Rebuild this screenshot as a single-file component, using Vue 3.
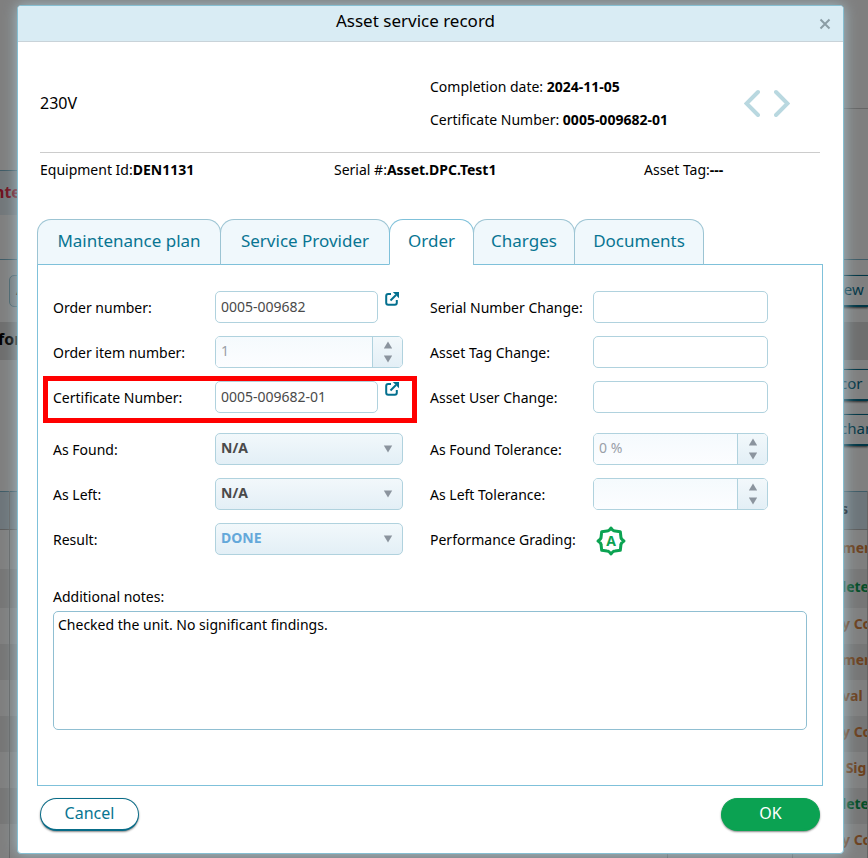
<script setup>
import { ref } from 'vue'

const tabs = ['Maintenance plan', 'Service Provider', 'Order', 'Charges', 'Documents']
const activeTab = ref('Order')

const rows = [
  { text: 'men', tone: 'pending' },
  { text: 'lete', tone: 'done' },
  { text: 'y Co', tone: 'pending' },
  { text: 'men', tone: 'pending' },
  { text: 'val', tone: 'pending' },
  { text: 'y Co', tone: 'pending' },
  { text: '\u00a0Sig', tone: 'pending' },
  { text: 'lete', tone: 'done' },
  { text: 'y Co', tone: 'pending' },
]

const orderNumber = ref('0005-009682')
const itemNumber = ref('1')
const certificateNumber = ref('0005-009682-01')
const asFound = ref('N/A')
const asLeft = ref('N/A')
const result = ref('DONE')
const serialChange = ref('')
const tagChange = ref('')
const userChange = ref('')
const foundTolerance = ref('0 %')
const leftTolerance = ref('')
const notes = ref('Checked the unit. No significant findings.')
</script>

<template>
  <div class="screen">
    <div class="page">
      <div class="page-top"></div>
      <div class="page-rule"></div>
      <div class="page-alert">nte</div>
      <div class="page-gap"></div>
      <div class="page-toolbar">
        <span class="page-box">A</span>
        <span class="page-button">iew</span>
      </div>
      <div class="page-band">for</div>
      <div class="page-actions">
        <span class="page-button">cor</span>
        <span class="page-button">char</span>
      </div>
      <table class="page-table">
        <colgroup>
          <col class="c-first" />
          <col />
          <col class="c-third" />
          <col class="c-status" />
        </colgroup>
        <thead>
          <tr><th></th><th></th><th></th><th>s</th></tr>
        </thead>
        <tbody>
          <tr v-for="(row, i) in rows" :key="i">
            <td></td><td></td><td></td><td :class="row.tone">{{ row.text }}</td>
          </tr>
        </tbody>
      </table>
    </div>
    <div class="backdrop"></div>

    <section class="modal" role="dialog" aria-labelledby="title">
      <header class="modal-head">
        <h1 id="title">Asset service record</h1>
        <button class="close" type="button" aria-label="Close">
          <svg width="12" height="12" viewBox="0 0 12 12"><path d="M1.5 1.5 10.5 10.5M10.5 1.5 1.5 10.5" /></svg>
        </button>
      </header>

      <div class="summary">
        <div class="name">230V</div>
        <div class="facts">
          <div>Completion date: <b>2024-11-05</b></div>
          <div>Certificate Number: <b>0005-009682-01</b></div>
        </div>
        <div class="pager">
          <button type="button" aria-label="Previous">
            <svg width="16" height="28" viewBox="0 0 16 28"><path d="M14 3 2.5 14.5 14 26" /></svg>
          </button>
          <button type="button" aria-label="Next">
            <svg width="16" height="28" viewBox="0 0 16 28"><path d="M2 3 13.5 14.5 2 26" /></svg>
          </button>
        </div>
      </div>

      <div class="ids">
        <div>Equipment Id:<b>DEN1131</b></div>
        <div>Serial #:<b>Asset.DPC.Test1</b></div>
        <div>Asset Tag:<b>---</b></div>
      </div>

      <nav class="tabs" role="tablist">
        <button
          v-for="tab in tabs"
          :key="tab"
          type="button"
          role="tab"
          :aria-selected="tab === activeTab"
          :class="['tab', { active: tab === activeTab }]"
          @click="activeTab = tab"
        >{{ tab }}</button>
      </nav>

      <div class="panel">
        <div class="form">
          <div class="column left">
            <div class="pair">
              <label for="order">Order number:</label>
              <div class="linked">
                <input id="order" v-model="orderNumber" class="box" type="text" />
                <a href="#order" aria-label="Open order">
                  <svg width="14" height="14" viewBox="0 0 14 14"><path class="frame" d="M6 2H3.2Q1.2 2 1.2 4v6.8q0 2 2 2h6.6q2 0 2-2V8" /><path class="frame" d="M5.5 8.5 11 3" /><path class="head" d="M7.8 0H14v6.2Z" /></svg>
                </a>
              </div>
            </div>
            <div class="pair">
              <label for="item">Order item number:</label>
              <div class="stepper">
                <input id="item" v-model="itemNumber" type="text" disabled />
                <div class="steps">
                  <button type="button" aria-label="Increase" disabled><svg width="10" height="8" viewBox="0 0 10 8"><path d="M5 .5 9.2 7.5H.8Z" /></svg></button>
                  <button type="button" aria-label="Decrease" disabled><svg width="10" height="8" viewBox="0 0 10 8"><path d="M.8.5h8.4L5 7.5Z" /></svg></button>
                </div>
              </div>
            </div>
            <div class="pair">
              <label for="cert">Certificate Number:</label>
              <div class="linked">
                <input id="cert" v-model="certificateNumber" class="box" type="text" />
                <a href="#cert" aria-label="Open certificate">
                  <svg width="14" height="14" viewBox="0 0 14 14"><path class="frame" d="M6 2H3.2Q1.2 2 1.2 4v6.8q0 2 2 2h6.6q2 0 2-2V8" /><path class="frame" d="M5.5 8.5 11 3" /><path class="head" d="M7.8 0H14v6.2Z" /></svg>
                </a>
              </div>
              <div class="highlight"></div>
            </div>
            <div class="pair spaced">
              <label for="found">As Found:</label>
              <div class="drop">
                <select id="found" v-model="asFound"><option>N/A</option></select>
                <svg width="10" height="8" viewBox="0 0 10 8"><path d="M.8.5h8.4L5 7.5Z" /></svg>
              </div>
            </div>
            <div class="pair">
              <label for="leftstate">As Left:</label>
              <div class="drop">
                <select id="leftstate" v-model="asLeft"><option>N/A</option></select>
                <svg width="10" height="8" viewBox="0 0 10 8"><path d="M.8.5h8.4L5 7.5Z" /></svg>
              </div>
            </div>
            <div class="pair">
              <label for="result">Result:</label>
              <div class="drop">
                <select id="result" v-model="result" class="blue"><option>DONE</option></select>
                <svg width="10" height="8" viewBox="0 0 10 8"><path d="M.8.5h8.4L5 7.5Z" /></svg>
              </div>
            </div>
          </div>

          <div class="column right">
            <div class="pair">
              <label for="serial">Serial Number Change:</label>
              <input id="serial" v-model="serialChange" class="box" type="text" />
            </div>
            <div class="pair">
              <label for="tag">Asset Tag Change:</label>
              <input id="tag" v-model="tagChange" class="box" type="text" />
            </div>
            <div class="pair">
              <label for="user">Asset User Change:</label>
              <input id="user" v-model="userChange" class="box" type="text" />
            </div>
            <div class="pair spaced">
              <label for="ftol">As Found Tolerance:</label>
              <div class="stepper">
                <input id="ftol" v-model="foundTolerance" type="text" disabled />
                <div class="steps">
                  <button type="button" aria-label="Increase" disabled><svg width="10" height="8" viewBox="0 0 10 8"><path d="M5 .5 9.2 7.5H.8Z" /></svg></button>
                  <button type="button" aria-label="Decrease" disabled><svg width="10" height="8" viewBox="0 0 10 8"><path d="M.8.5h8.4L5 7.5Z" /></svg></button>
                </div>
              </div>
            </div>
            <div class="pair">
              <label for="ltol">As Left Tolerance:</label>
              <div class="stepper">
                <input id="ltol" v-model="leftTolerance" type="text" disabled />
                <div class="steps">
                  <button type="button" aria-label="Increase" disabled><svg width="10" height="8" viewBox="0 0 10 8"><path d="M5 .5 9.2 7.5H.8Z" /></svg></button>
                  <button type="button" aria-label="Decrease" disabled><svg width="10" height="8" viewBox="0 0 10 8"><path d="M.8.5h8.4L5 7.5Z" /></svg></button>
                </div>
              </div>
            </div>
            <div class="pair">
              <span class="caption">Performance Grading:</span>
              <svg class="badge" width="36" height="36" viewBox="-18 -18 36 36">
                <path d="M0-13Q2-9.8 4-9.9L9.3-9.3 9.9-4Q9.8-2 13 0 9.8 2 9.9 4L9.3 9.3 4 9.9Q2 9.8 0 13-2 9.8-4 9.9L-9.3 9.3-9.9 4Q-9.8 2-13 0-9.8-2-9.9-4L-9.3-9.3-4-9.9Q-2-9.8 0-13Z" />
                <text x="0" y="5" text-anchor="middle">A</text>
              </svg>
            </div>
          </div>
        </div>

        <label class="notes-label" for="notes">Additional notes:</label>
        <textarea id="notes" v-model="notes"></textarea>
      </div>

      <footer class="actions">
        <button class="pill" type="button">Cancel</button>
        <button class="pill primary" type="button">OK</button>
      </footer>
    </section>
  </div>
</template>

<style>
body {
  background: #808080;
}
</style>

<style scoped>
* {
  box-sizing: border-box;
}
.screen {
  position: relative;
  min-height: 100vh;
  overflow: hidden;
  display: flow-root;
  font-family: "Noto Sans", "Open Sans", sans-serif;
  font-size: 14px;
  line-height: 20px;
  color: #000;
}
button,
input,
select,
textarea {
  font: inherit;
  margin: 0;
}
button {
  border: 0;
  padding: 0;
  background: none;
  cursor: pointer;
}
h1 {
  margin: 0;
}

/* Page behind the dialog */
.page,
.backdrop {
  position: absolute;
  inset: 0;
  overflow: hidden;
}
.page {
  background: #fff;
}
.backdrop {
  background: rgba(0, 0, 0, 0.5);
}
.page-top {
  height: 108px;
}
.page-rule {
  height: 62px;
  margin-left: 50%;
  border-top: 1px solid #ccc;
}
.page-alert {
  width: 50%;
  height: 45px;
  border-top: 1px solid #7fb6cc;
  background: #e4eff4;
  color: #e0203c;
  font-size: 16px;
  font-weight: 700;
  line-height: 42px;
  text-indent: -6px;
}
.page-gap {
  height: 45px;
  border-bottom: 1px solid #7fb6cc;
}
.page-toolbar {
  display: flex;
  justify-content: space-between;
  height: 62px;
  padding: 15px 0;
}
.page-box {
  width: 60px;
  margin-left: 9px;
  padding: 4px 6px;
  border: 1px solid #8fc0d0;
  border-radius: 5px;
  background: #eaf4f8;
}
.page-button {
  width: 68px;
  height: 32px;
  padding-left: 40px;
  border: solid #046d8b;
  border-width: 1px 0 2px;
  box-shadow: 0 1px 2px #555;
  color: #046d8b;
  font-size: 15px;
  line-height: 27px;
  white-space: nowrap;
  overflow: hidden;
}
.page-band {
  height: 38px;
  background: #dcdcdc;
  font-size: 16px;
  font-weight: 700;
  line-height: 34px;
  text-indent: -2px;
}
.page-actions {
  display: flex;
  flex-direction: column;
  align-items: flex-end;
  gap: 13px;
  height: 131px;
  padding-top: 9px;
}
.page-table {
  width: 100%;
  table-layout: fixed;
  border-collapse: collapse;
}
.c-first {
  width: 9px;
}
.c-third {
  width: 125px;
}
.c-status {
  width: 75px;
}
.page-table th {
  height: 38px;
  background: #dbebf4;
  border-top: 1px solid #7fb6cc;
  border-bottom: 1px solid #bbb;
}
.page-table th,
.page-table td {
  padding: 0 0 3px 48px;
  border-right: 1px solid #c8c8c8;
  text-align: left;
  font-size: 14px;
  font-weight: 700;
  white-space: nowrap;
  overflow: hidden;
}
.page-table td:last-child {
  padding-left: 49px;
}
.page-table th:not(:last-child),
.page-table td:not(:last-child) {
  padding: 0;
}
.page-table td {
  height: 36px;
}
.page-table tbody tr:nth-child(-n + 2) td {
  height: 39px;
}
.page-table tbody tr:nth-child(even) {
  background: #ededed;
}
.page-table .pending {
  color: #d9833e;
}
.page-table .done {
  color: #0a9c50;
}

/* Dialog */
.modal {
  position: relative;
  margin: 5px 24px 5px 17px;
  border: 1px solid #86bfd2;
  border-radius: 4px;
  background: #fff;
  box-shadow: 0 0 14px #a5bfc9;
}
.modal-head {
  display: flex;
  align-items: center;
  height: 36px;
  padding-right: 12px;
  border-bottom: 1px solid #c9d3d9;
  border-radius: 3px 3px 0 0;
  background: #d9ecf4;
}
.modal-head h1 {
  flex: 1;
  padding: 0 0 6px;
  font-size: 17px;
  font-weight: 400;
  text-align: center;
}
.close {
  display: flex;
  margin-left: 6px;
}
.close path {
  fill: none;
  stroke: #8b9da5;
  stroke-width: 2;
}
.summary {
  display: grid;
  grid-template-columns: 390fr 314fr 76fr;
  align-items: center;
  height: 111px;
  margin: 0 23px 0 22px;
  padding-top: 12px;
  border-bottom: 1px solid #ccc;
}
.name {
  font-size: 16px;
}
.facts {
  display: grid;
  gap: 13px;
}
.pager {
  display: flex;
  gap: 14px;
}
.pager button {
  display: flex;
}
.pager path {
  fill: none;
  stroke: #b9d8e0;
  stroke-width: 4;
  stroke-linecap: round;
}
.ids {
  display: grid;
  grid-template-columns: 294fr 310fr 176fr;
  margin: 0 23px 0 22px;
  padding: 7px 0 39px;
}
.tabs {
  position: relative;
  z-index: 1;
  display: grid;
  grid-template-columns: 183px 169px 84px 101px 129px;
  margin: 0 19px;
}
.tab {
  height: 46px;
  margin-right: -1px;
  padding-bottom: 3px;
  border: 1px solid #9cc4d3;
  border-bottom-color: #7fc1da;
  border-radius: 14px 14px 0 0;
  background: #f0f8fc;
  color: #087592;
  font-size: 17px;
  white-space: nowrap;
}
.tab.active {
  border-color: #7fc1da;
  border-bottom-color: #fff;
  background: #fff;
}
.panel {
  margin: -1px 20px 0 19px;
  padding: 26px 15px 55px;
  border: 1px solid #7fc1da;
}
.form {
  display: grid;
  grid-template-columns: 350px 338px;
  column-gap: 27px;
}
.column {
  display: flex;
  flex-direction: column;
  gap: 13px;
}
.pair {
  position: relative;
  display: grid;
  grid-template-columns: 162px 1fr;
  height: 32px;
}
.right .pair {
  grid-template-columns: 163px 1fr;
}
.spaced {
  margin-top: 7px;
}
.pair > label,
.caption {
  padding-top: 7px;
  white-space: nowrap;
}
.linked {
  display: grid;
  grid-template-columns: 163px 14px;
  gap: 7px;
}
.linked a {
  display: flex;
  padding-top: 1px;
}
.frame {
  fill: none;
  stroke: #04708f;
  stroke-width: 2;
}
.head {
  fill: #04708f;
}
.box,
.stepper,
.drop select {
  width: 100%;
  height: 32px;
  border: 1px solid #b0d2de;
  border-radius: 5px;
  background: #fff;
  color: #4a4a4a;
}
.box {
  padding: 0 5px 2px;
}
.stepper {
  display: grid;
  grid-template-columns: 1fr 30px;
  overflow: hidden;
}
.stepper input {
  min-width: 0;
  padding: 0 5px 2px;
  border: 0;
  background: linear-gradient(#f5fafd, #fcfdff);
  color: #9a9fa8;
}
.steps {
  display: grid;
  align-content: center;
  justify-items: center;
  gap: 6px;
  border-left: 1px solid #b0d2de;
  background: linear-gradient(#f2f8fb, #e3eff6);
}
.steps button {
  display: flex;
}
.steps path,
.drop path {
  fill: #8b949e;
}
.drop {
  position: relative;
}
.drop select {
  appearance: none;
  padding: 0 5px 3px;
  background: linear-gradient(#f2f8fb, #e3eff6);
  font-weight: 700;
}
.drop select.blue {
  color: #64a8da;
}
.drop svg {
  position: absolute;
  top: 12px;
  right: 10px;
  pointer-events: none;
}
.highlight {
  position: absolute;
  inset: -5px -14px -10px -10px;
  border: 5px solid #f00;
  pointer-events: none;
}
.badge path {
  fill: none;
  stroke: #0ca352;
  stroke-width: 3;
  stroke-linejoin: round;
}
.badge text {
  fill: #0ca352;
  font-size: 14px;
  font-weight: 700;
}
.notes-label {
  display: block;
  margin-top: 32px;
}
textarea {
  display: block;
  width: 100%;
  height: 119px;
  margin-top: 4px;
  padding: 3px 4px;
  border: 1px solid #90bfd2;
  border-radius: 5px;
  background: #fff;
  color: #000;
  resize: none;
}
.actions {
  display: flex;
  justify-content: space-between;
  padding: 12px 23px 22px 22px;
}
.pill {
  width: 99px;
  height: 33px;
  padding-bottom: 2px;
  border: 1px solid #086c88;
  border-bottom-width: 2px;
  border-radius: 17px;
  background: #fff;
  box-shadow: 0 1px 2px #888;
  color: #087592;
  font-size: 16px;
}
.primary {
  border-color: #0ba252;
  background: #0ba252;
  color: #fff;
}
</style>
